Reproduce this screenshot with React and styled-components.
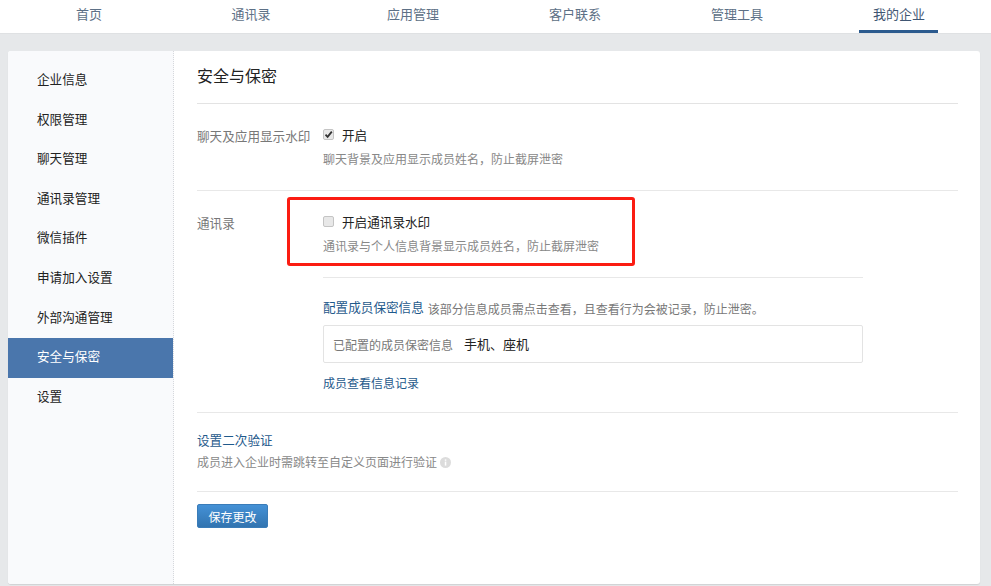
import React from 'react'
import styled, { createGlobalStyle } from 'styled-components'

const GlobalStyle = createGlobalStyle`
html, body { margin: 0; padding: 0; height: 100%; background: #e6e8ea; overflow: hidden; }
body { font-family: "Liberation Sans", "Noto Sans CJK SC", sans-serif; font-size: 13px; color: #222; }
* { box-sizing: border-box; }
`

const Page = styled.div`
width: 991px;
height: 586px;
display: flex;
flex-direction: column;
position: relative;
`

const TopNav = styled.nav`
height: 33px;
background: #fff;
display: grid;
grid-template-columns: repeat(6, 162px);
padding-left: 8px;
box-shadow: 0 1px 0 #dfe1e3;
`

const Tab = styled.a`
display: block;
position: relative;
text-align: center;
line-height: 30px;
font-size: 13px;
color: ${p => (p.$active ? '#3f5673' : '#5d7086')};
&::after {
  content: "";
  display: ${p => (p.$active ? 'block' : 'none')};
  position: absolute;
  left: 41px;
  bottom: 0;
  width: 79px;
  height: 3px;
  background: #2b5a8e;
}
`

const Card = styled.div`
margin: 18px 11px 2px 8px;
flex: 1;
display: flex;
background: #fff;
border-radius: 3px;
overflow: hidden;
box-shadow: 0 1px 1px #d0d2d4;
`

const Sidebar = styled.ul`
list-style: none;
margin: 0;
padding: 10px 0 0;
width: 166px;
flex: none;
background: #f9fafc;
border-right: 1px dotted #d6d8dc;
`

const SideItem = styled.li`
height: 39.6px;
line-height: 39px;
padding-left: 29px;
font-size: 12.6px;
background: ${p => (p.$active ? '#4a76ac' : 'transparent')};
color: ${p => (p.$active ? '#fff' : '#222')};
`

const Main = styled.main`
flex: 1;
padding: 0 22px 0 23px;
`

const Title = styled.h2`
margin: 0;
height: 53px;
line-height: 52px;
font-size: 16px;
font-weight: 400;
color: #222;
border-bottom: 1px solid #e3e3e3;
`

const Section = styled.section`
display: flex;
padding: 20px 0 ${p => p.$bottom};
border-bottom: 1px solid #e8e8e8;
`

const Label = styled.div`
width: 126px;
flex: none;
padding-top: 3px;
font-size: 12.6px;
line-height: 20px;
color: #787878;
`

const Body = styled.div`
flex: 1;
max-width: 540px;
`

const CheckRow = styled.label`
display: flex;
align-items: center;
height: 20px;
font-size: 12.6px;
color: #222;
`

const Check = styled.span`
width: 11px;
height: 11px;
margin-right: 8px;
flex: none;
display: flex;
align-items: center;
justify-content: center;
border-radius: 2px;
border: 1px solid #c4c4c4;
background: #e8e8e8;
`

const Hint = styled.p`
margin: ${p => p.$margin || '7px 0 0'};
font-size: 12px;
line-height: 18px;
color: #888;
`

const SubDivider = styled.div`
height: 1px;
background: #e8e8e8;
margin: 21px 0 20px;
`

const LinkText = styled.a`
font-size: ${p => (p.$small ? '12px' : '12.6px')};
line-height: 20px;
color: #1f5a8c;
`

const ConfigHead = styled.div`
display: flex;
align-items: center;
gap: 4px;
height: 20px;
`

const SmallNote = styled.span`
font-size: 12px;
color: #787878;
`

const ConfigBox = styled.div`
display: flex;
align-items: center;
gap: 11px;
height: 38px;
margin: 7px 0 11px;
padding-left: 9px;
border: 1px solid #e3e3e3;
border-radius: 2px;
`

const BoxLabel = styled.span`
font-size: 12px;
color: #787878;
`

const BoxValue = styled.span`
padding-bottom: 2px;
font-size: 13px;
color: #222;
`

const VerifySection = styled.section`
padding: 18px 0 19px;
border-bottom: 1px solid #e8e8e8;
`

const InfoDot = styled.span`
display: inline-flex;
vertical-align: -1px;
margin-left: 3px;
`

const SaveButton = styled.button`
display: block;
margin-top: 12px;
width: 71px;
height: 24px;
padding: 0;
border: 1px solid #3a7cb8;
border-radius: 2px;
background: linear-gradient(#4491d6, #3274b0);
color: #fff;
font-family: inherit;
font-size: 12px;
`

const RedFrame = styled.div`
position: absolute;
left: 287px;
top: 197px;
width: 348px;
height: 69px;
border: 3px solid #fb1c12;
border-radius: 3px;
`

const tabs = ['首页', '通讯录', '应用管理', '客户联系', '管理工具', '我的企业']
const menu = ['企业信息', '权限管理', '聊天管理', '通讯录管理', '微信插件', '申请加入设置', '外部沟通管理', '安全与保密', '设置']

const App = () => {
    return (
        <Page>
            <GlobalStyle />
            <TopNav>
                {tabs.map(t => <Tab key={t} $active={t === '我的企业'}>{t}</Tab>)}
            </TopNav>
            <Card>
                <Sidebar>
                    {menu.map(m => <SideItem key={m} $active={m === '安全与保密'}>{m}</SideItem>)}
                </Sidebar>
                <Main>
                    <Title>安全与保密</Title>
                    <Section $bottom="21px">
                        <Label>聊天及应用显示水印</Label>
                        <Body>
                            <CheckRow>
                                <Check>
                                    <svg width="9" height="9" viewBox="0 0 9 9">
                                        <path d="M1.5 4.6 L3.6 6.8 L7.8 1.6" fill="none" stroke="#333" strokeWidth="1.8" />
                                    </svg>
                                </Check>
                                开启
                            </CheckRow>
                            <Hint>聊天背景及应用显示成员姓名，防止截屏泄密</Hint>
                        </Body>
                    </Section>
                    <Section $bottom="18px">
                        <Label>通讯录</Label>
                        <Body>
                            <CheckRow><Check />开启通讯录水印</CheckRow>
                            <Hint>通讯录与个人信息背景显示成员姓名，防止截屏泄密</Hint>
                            <SubDivider />
                            <ConfigHead>
                                <LinkText>配置成员保密信息</LinkText>
                                <SmallNote>该部分信息成员需点击查看，且查看行为会被记录，防止泄密。</SmallNote>
                            </ConfigHead>
                            <ConfigBox>
                                <BoxLabel>已配置的成员保密信息</BoxLabel>
                                <BoxValue>手机、座机</BoxValue>
                            </ConfigBox>
                            <LinkText $small>成员查看信息记录</LinkText>
                        </Body>
                    </Section>
                    <VerifySection>
                        <LinkText>设置二次验证</LinkText>
                        <Hint $margin="3px 0 0">
                            成员进入企业时需跳转至自定义页面进行验证
                            <InfoDot>
                                <svg width="11" height="11" viewBox="0 0 11 11">
                                    <circle cx="5.5" cy="5.5" r="5.5" fill="#dcdcdc" />
                                    <rect x="4.8" y="4.6" width="1.5" height="4" fill="#fff" />
                                    <rect x="4.8" y="2.4" width="1.5" height="1.4" fill="#fff" />
                                </svg>
                            </InfoDot>
                        </Hint>
                    </VerifySection>
                    <SaveButton>保存更改</SaveButton>
                </Main>
            </Card>
            <RedFrame />
        </Page>
    )
}

export default App
